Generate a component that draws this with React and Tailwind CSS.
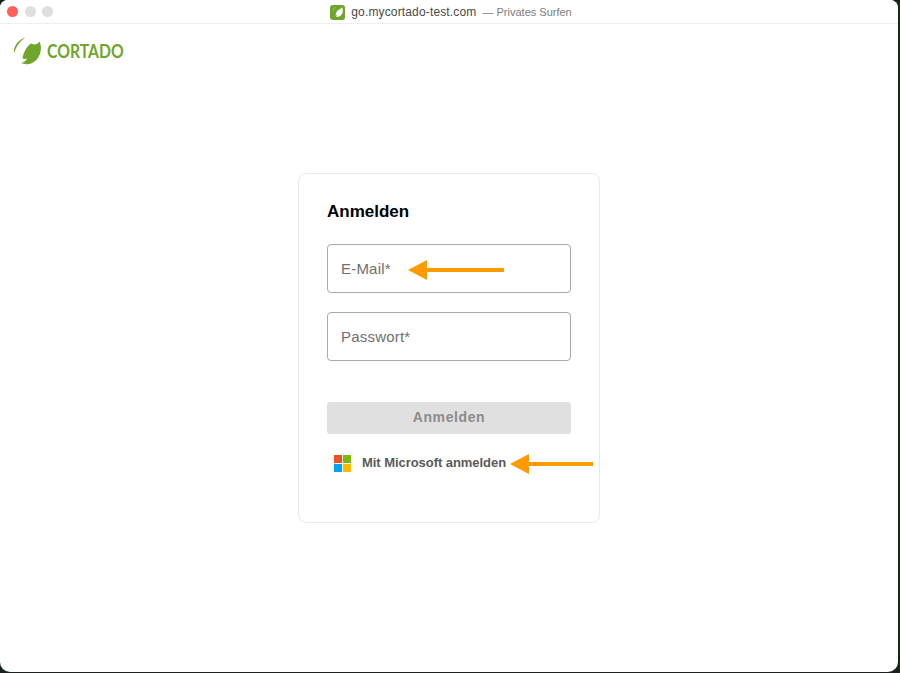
import React from "react";

function Arrow({ width, className }) {
  return (
    <svg className={className} width={width} height="20" viewBox={`0 0 ${width} 20`}>
      <path d={`M${width} 8H19V0L0 10l19 10v-8H${width}z`} fill="#ff9b00" />
    </svg>
  );
}

function Leaf() {
  return (
    <svg width="30" height="30" viewBox="0 0 30 30">
      <path d="M12.500 1.500C7 3 2 8 1 14c-.2 1 0 2 .5 3C2.500 11 7 5 12.500 1.500z" fill="#6fa52b" />
      <path d="M26.500 5.500C27.500 8 28.500 11 27.500 16 26 22 22 27 16 28c-3 .5-5.500 0-8-1 2.500-.5 5-2 6-4.500-1.500.5-3 .5-4.500 0C10.500 17 13 11 18 7.500c1.500.5 3 1 4 1 2-.5 3.500-1.500 4.500-3z" fill="#6fa52b" />
    </svg>
  );
}

function Field({ label }) {
  return (
    <div className="flex h-[49px] w-[244px] items-center rounded-[4px] border border-[#a9a9a9] bg-white px-[13px] pt-[2px] text-[15px] tracking-[0.2px] text-[#6f6f6f]">
      {label}
    </div>
  );
}

export default function App() {
  return (
    <div className="h-[673px] w-[900px] overflow-hidden bg-[#16241a] font-['Liberation_Sans',Arial,sans-serif]">
      <div className="h-[672px] w-[898px] overflow-hidden rounded-t-[8px] rounded-b-[10px] bg-white">
        <header className="relative flex h-[24px] items-center justify-center border-b border-[#efefef] bg-white">
          <div className="absolute left-[7px] top-[6px] flex gap-[6.5px]">
            <span className="h-[11px] w-[11px] rounded-full bg-[#ff5f57]" />
            <span className="h-[11px] w-[11px] rounded-full bg-[#dfdfdf]" />
            <span className="h-[11px] w-[11px] rounded-full bg-[#dfdfdf]" />
          </div>
          <div className="flex items-center pl-[4px] pt-[1px]">
            <span className="flex h-[15px] w-[15px] items-center justify-center rounded-[3px] bg-[#6fa52b]">
              <svg width="12" height="12" viewBox="0 0 30 30">
                <path d="M25 3c1 2 2.500 5 2 10-.5 6-4 11-9 13-3 1-6 1-8 0 2-1 3-2 3.500-3-2 .5-4 .5-5 0 1-3 2-7 5-11 3-3.500 8-4.500 11.500-9z" fill="#fff" />
                <path d="M11 2C6 4 2 9 1.500 15c1-5 5-10 9.500-13z" fill="#fff" />
              </svg>
            </span>
            <span className="ml-[6px] text-[12px] tracking-[0.15px] text-[#4a4a4a]">go.mycortado-test.com</span>
            <span className="ml-[6px] text-[11px] text-[#7d7d7d]">— Privates Surfen</span>
          </div>
        </header>

        <div className="flex h-[30px] items-center pl-[13px] pt-[24px]">
          <Leaf />
          <span className="ml-[4px] inline-block origin-left scale-x-[0.875] font-['Lato',sans-serif] text-[18px] leading-none font-bold text-[#6fa52b]">
            CORTADO
          </span>
        </div>

        <main className="flex justify-center pt-[119px]">
          <section className="flex h-[350px] w-[302px] flex-col rounded-[8px] border border-[#e9e9e9] bg-white px-[28px] pt-[28px]">
            <h1 className="text-[17px] leading-[20px] font-bold text-black">Anmelden</h1>
            <div className="relative mt-[22px]">
              <Field label="E-Mail*" />
              <Arrow width={96} className="absolute left-[81px] top-[16px]" />
            </div>
            <div className="mt-[19px]">
              <Field label="Passwort*" />
            </div>
            <button className="mt-[41px] flex h-[32px] w-[244px] items-center justify-center rounded-[3px] bg-[#e0e0e0] pb-[1px] text-[14px] font-bold tracking-[0.6px] text-[#8b8b8b]">
              Anmelden
            </button>
            <div className="relative mt-[20px] flex h-[18px] items-center pl-[7px]">
              <svg width="17" height="17" viewBox="0 0 17 17">
                <rect x="0" y="0" width="8" height="8" fill="#f25022" />
                <rect x="9" y="0" width="8" height="8" fill="#7fba00" />
                <rect x="0" y="9" width="8" height="8" fill="#00a4ef" />
                <rect x="9" y="9" width="8" height="8" fill="#ffb900" />
              </svg>
              <span className="ml-[11px] text-[13px] font-bold tracking-[-0.05px] text-[#5a5a5a]">Mit Microsoft anmelden</span>
              <Arrow width={83} className="absolute left-[183px] top-0" />
            </div>
          </section>
        </main>
      </div>
    </div>
  );
}
